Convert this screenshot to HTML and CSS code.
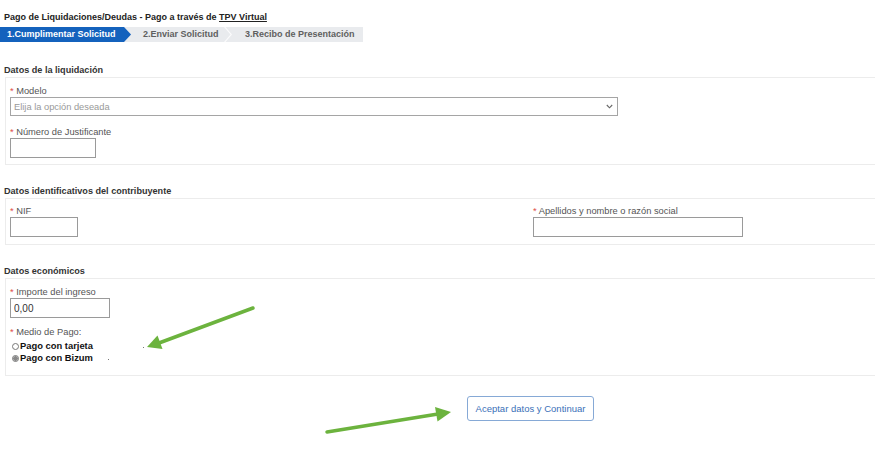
FILE: index.html
```html
<!DOCTYPE html>
<html lang="es">
<head>
<meta charset="utf-8">
<title>Pago de Liquidaciones/Deudas</title>
<link rel="stylesheet" href="styles.css">
</head>
<body>
<div class="page">
  <h1 class="title">Pago de Liquidaciones/Deudas - Pago a través de <u>TPV Virtual</u></h1>
  <div class="steps">
    <div class="step step-active">1.Cumplimentar Solicitud</div>
    <div class="step step-2">2.Enviar Solicitud</div>
    <div class="step step-3">3.Recibo de Presentación</div>
  </div>

  <section class="section first">
    <h2 class="sec-title">Datos de la liquidación</h2>
    <div class="box">
      <div class="field">
        <div class="label"><span class="req">*</span> Modelo</div>
        <div class="select">
          <span>Elija la opción deseada</span>
          <svg width="7" height="5" viewBox="0 0 7 5"><path d="M0.8 1 L3.5 3.8 L6.2 1" fill="none" stroke="#666" stroke-width="1.1"/></svg>
        </div>
      </div>
      <div class="field gap">
        <div class="label"><span class="req">*</span> Número de Justificante</div>
        <input class="input w-just" type="text">
      </div>
    </div>
  </section>

  <section class="section">
    <h2 class="sec-title">Datos identificativos del contribuyente</h2>
    <div class="box cols">
      <div class="field">
        <div class="label"><span class="req">*</span> NIF</div>
        <input class="input w-nif" type="text">
      </div>
      <div class="field">
        <div class="label"><span class="req">*</span> Apellidos y nombre o razón social</div>
        <input class="input w-name" type="text">
      </div>
    </div>
  </section>

  <section class="section">
    <h2 class="sec-title">Datos económicos</h2>
    <div class="box box-eco">
      <div class="field">
        <div class="label"><span class="req">*</span> Importe del ingreso</div>
        <input class="input w-imp" type="text" value="0,00">
      </div>
      <div class="field gap-s">
        <div class="label"><span class="req">*</span> Medio de Pago:</div>
        <div class="radios">
          <div class="radio-row"><span class="radio"></span>Pago con tarjeta<span class="speck s1"></span></div>
          <div class="radio-row"><span class="radio checked"></span>Pago con Bizum<span class="speck s2"></span></div>
        </div>
      </div>
    </div>
  </section>

  <div class="actions">
    <button class="btn" type="button">Aceptar datos y Continuar</button>
  </div>

  <svg class="arrows" width="886" height="473" viewBox="0 0 886 473">
    <line x1="253" y1="308" x2="159" y2="343" stroke="#6cb33e" stroke-width="3.5" stroke-linecap="round"/>
    <polygon points="147,347 157.5,335.5 162.5,349" fill="#6cb33e"/>
    <line x1="327" y1="432" x2="438" y2="414" stroke="#6cb33e" stroke-width="3.5" stroke-linecap="round"/>
    <polygon points="451,412 435,407 437.5,421.5" fill="#6cb33e"/>
  </svg>
</div>
</body>
</html>
```

FILE: styles.css
```css
body {
  margin: 0;
  font-family: "Liberation Sans", Arial, sans-serif;
  color: #333;
  background: #fff;
}

.page {
  position: relative;
  padding-top: 11px;
  height: 473px;
  box-sizing: border-box;
  overflow: hidden;
}

.title {
  margin: 0 0 0 4px;
  font-size: 9px;
  line-height: 12px;
  font-weight: bold;
  color: #222;
}

.steps {
  display: flex;
  width: 363px;
  height: 15px;
  margin-top: 4px;
  background: #e9ebee;
  font-size: 9px;
  font-weight: bold;
  line-height: 15px;
}

.step {
  position: relative;
  box-sizing: border-box;
  white-space: nowrap;
  color: #5f5f5f;
}

.step-active {
  width: 131px;
  padding-left: 7px;
  background: #1462bd;
  color: #fff;
  clip-path: polygon(0 0, 124px 0, 131px 50%, 124px 100%, 0 100%);
}

.step-2 {
  width: 101px;
  padding-left: 12px;
}

.step-2::after {
  content: "";
  position: absolute;
  right: 0;
  top: 0;
  width: 8px;
  height: 15px;
  background: #fbfbfc;
  clip-path: polygon(0 0, 1.5px 0, 100% 50%, 1.5px 100%, 0 100%, 6.5px 50%);
}

.step-3 {
  padding-left: 13px;
}

.section {
  margin-top: 20px;
}

.section.first {
  margin-top: 22px;
}

.sec-title {
  margin: 0 0 1px 4px;
  font-size: 9.1px;
  line-height: 12px;
  font-weight: bold;
  color: #333;
}

.box {
  margin-left: 5px;
  width: 870px;
  box-sizing: border-box;
  border: 1px solid #ececec;
  border-right: none;
  padding: 7px 5px 6px 4px;
}

.cols {
  display: grid;
  grid-template-columns: 523px 1fr;
  padding-top: 6px;
  padding-bottom: 7px;
}

.box-eco {
  padding-bottom: 11px;
}

.field {
  display: flex;
  flex-direction: column;
  align-items: flex-start;
}

.gap {
  margin-top: 10px;
}

.gap-s {
  margin-top: 8px;
}

.label {
  font-size: 9.3px;
  line-height: 12px;
  color: #555;
}

.req {
  color: #e0504a;
}

.select {
  display: flex;
  align-items: center;
  justify-content: space-between;
  width: 608px;
  height: 19px;
  box-sizing: border-box;
  border: 1px solid #a5a5a5;
  padding: 0 4px 0 3px;
  font-size: 9.3px;
  color: #999;
}

.input {
  height: 20px;
  box-sizing: border-box;
  border: 1px solid #9a9a9a;
  margin: 0;
  padding: 0 3px;
  font-family: "Liberation Sans", Arial, sans-serif;
  font-size: 10px;
  color: #333;
  background: #fff;
  border-radius: 0;
}

.w-just { width: 86px; }
.w-nif { width: 68px; }
.w-name { width: 210px; }
.w-imp { width: 100px; }

.radios {
  margin-top: 2px;
}

.radio-row {
  position: relative;
  display: flex;
  align-items: center;
  font-size: 9.4px;
  line-height: 12px;
  font-weight: bold;
  color: #111;
}

.radio {
  width: 7px;
  height: 7px;
  box-sizing: border-box;
  border: 1px solid #777;
  border-radius: 50%;
  margin: 0 1px 0 2px;
  background: #fff;
}

.radio.checked {
  background: radial-gradient(circle, #888 0 2px, #fff 2.5px);
}

.speck {
  position: absolute;
  top: 7px;
  width: 1px;
  height: 1px;
  background: #777;
}

.s1 { left: 133px; }
.s2 { left: 98px; }

.actions {
  margin-top: 20px;
  padding-left: 467px;
}

.btn {
  width: 127px;
  height: 25px;
  box-sizing: border-box;
  border: 1px solid #86a9d6;
  border-radius: 3px;
  background: #fff;
  color: #3a70b8;
  font-family: "Liberation Sans", Arial, sans-serif;
  font-size: 9.5px;
  padding: 0;
}

.arrows {
  position: absolute;
  left: 0;
  top: 0;
  pointer-events: none;
}
```
